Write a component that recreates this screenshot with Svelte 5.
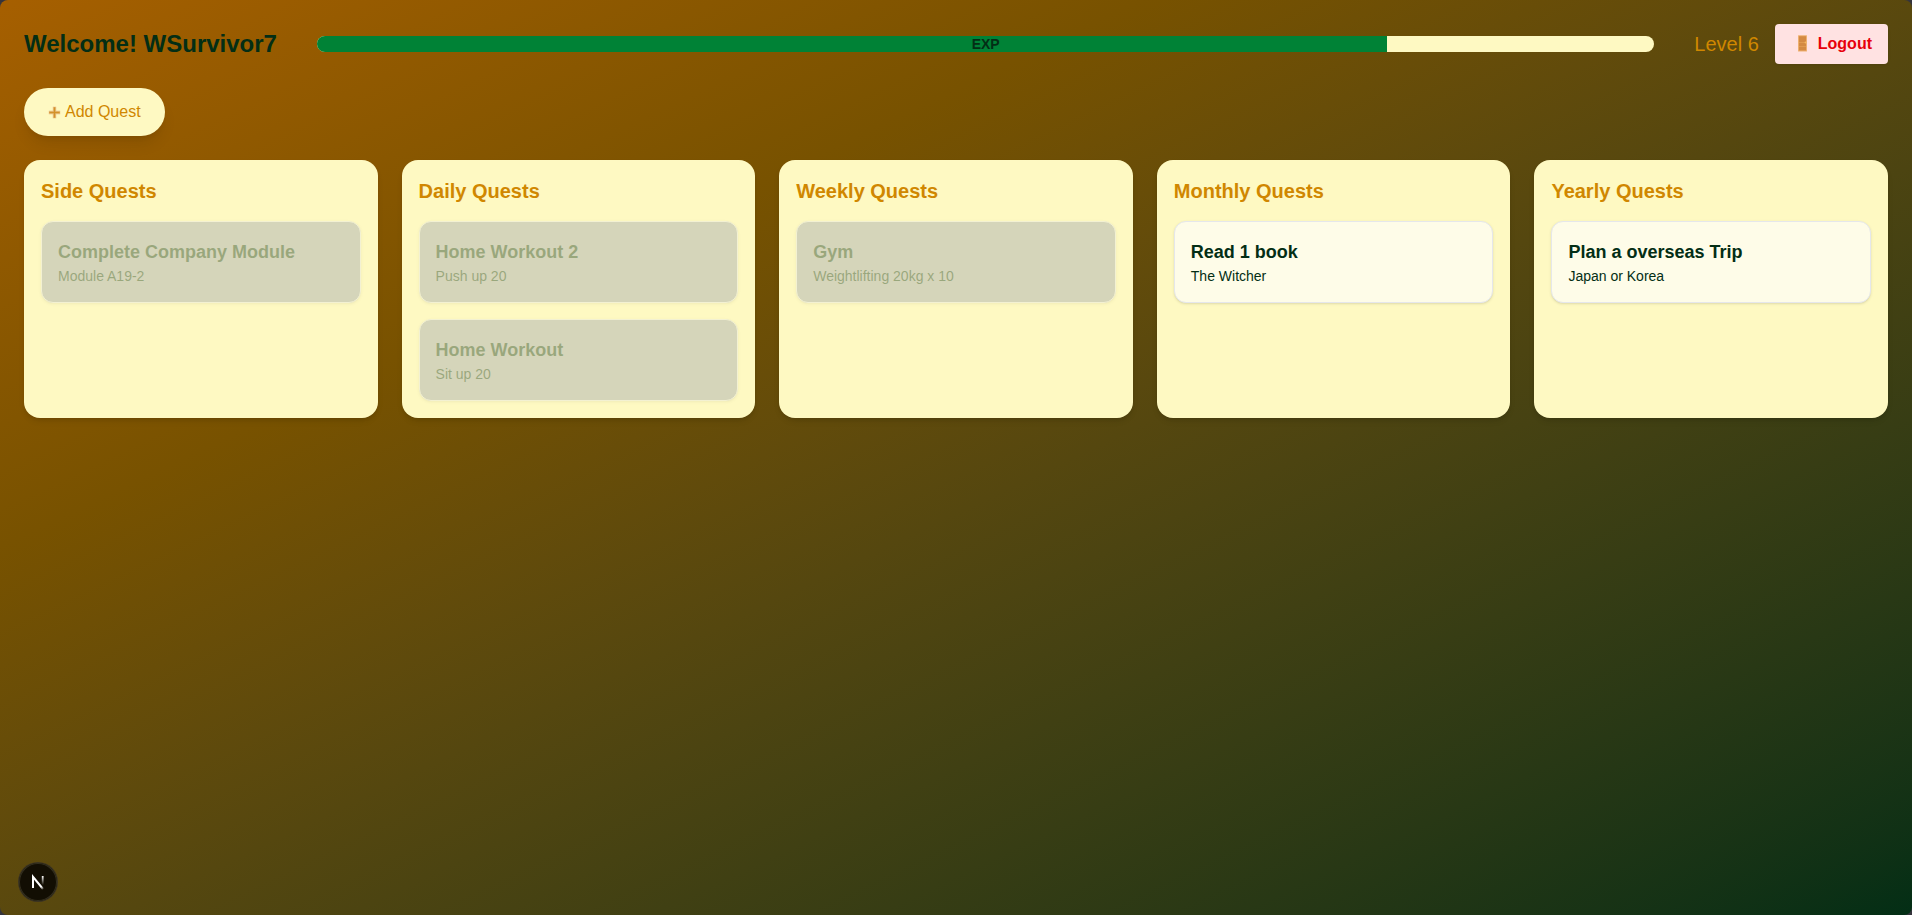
<script>
  const exp = 80;
  const columns = [
    { title: 'Side Quests', quests: [{ name: 'Complete Company Module', note: 'Module A19-2', done: true }] },
    {
      title: 'Daily Quests',
      quests: [
        { name: 'Home Workout 2', note: 'Push up 20', done: true },
        { name: 'Home Workout', note: 'Sit up 20', done: true }
      ]
    },
    { title: 'Weekly Quests', quests: [{ name: 'Gym', note: 'Weightlifting 20kg x 10', done: true }] },
    { title: 'Monthly Quests', quests: [{ name: 'Read 1 book', note: 'The Witcher', done: false }] },
    { title: 'Yearly Quests', quests: [{ name: 'Plan a overseas Trip', note: 'Japan or Korea', done: false }] }
  ];
</script>

<main>
  <header>
    <h1>Welcome! WSurvivor7</h1>
    <div class="bar">
      <div class="fill" style="width: {exp}%"></div>
      <span>EXP</span>
    </div>
    <div class="right">
      <span class="level">Level 6</span>
      <button class="logout">
        <svg width="22" height="18" viewBox="0 0 22 18">
          <rect x="7" y="0.2" width="9" height="16.3" rx="0.5" fill="#eeb070" />
          <rect x="8" y="1.2" width="7" height="14.3" fill="#d48a42" />
          <path d="M8 7.5h7M8 11.5h7" stroke="#e09a50" />
          <circle cx="14.5" cy="7.5" r="0.9" fill="#f5b95c" />
        </svg>
        Logout
      </button>
    </div>
  </header>

  <button class="add">
    <svg width="13" height="13" viewBox="0 0 13 13">
      <path d="M6.5 0.8v11.4M0.8 6.5h11.4" stroke="#e8bd80" stroke-width="3.4" />
      <path d="M6.5 1.3v10.4M1.3 6.5h10.4" stroke="#d3922a" stroke-width="1.5" />
    </svg>
    Add Quest
  </button>

  <div class="board">
    {#each columns as col}
      <section>
        <h2>{col.title}</h2>
        {#each col.quests as q}
          <article class:done={q.done}>
            <h3>{q.name}</h3>
            <p>{q.note}</p>
          </article>
        {/each}
      </section>
    {/each}
  </div>

  <div class="badge">
    <svg width="38" height="38" viewBox="0 0 38 38" fill="none">
      <defs>
        <linearGradient id="diag" gradientUnits="userSpaceOnUse" x1="19" y1="19" x2="25" y2="26">
          <stop stop-color="#fff" />
          <stop offset="0.6" stop-color="#fff" />
          <stop offset="1" stop-color="#fff" stop-opacity="0.1" />
        </linearGradient>
        <linearGradient id="stem" gradientUnits="userSpaceOnUse" x1="24" y1="13" x2="24" y2="22">
          <stop stop-color="#fff" />
          <stop offset="1" stop-color="#fff" stop-opacity="0" />
        </linearGradient>
      </defs>
      <path d="M14 25V13.8L24 26" stroke="url(#diag)" stroke-width="2" />
      <path d="M23.7 13v9" stroke="url(#stem)" stroke-width="1.8" />
    </svg>
  </div>
</main>

<style>
  :global(body) {
    margin: 0;
    background: #35343c;
  }
  main {
    box-sizing: border-box;
    height: 915px;
    padding: 24px;
    border-radius: 8px;
    background: linear-gradient(to bottom right in oklab, oklch(55.4% 0.135 66.442), oklch(26.6% 0.065 152.934));
    font-family: 'Liberation Sans', Arial, sans-serif;
    font-size: 16px;
    line-height: 24px;
    color: #032e15;
    overflow: hidden;
  }
  h1, h2, h3, p {
    margin: 0;
  }
  button {
    border: 0;
    font: inherit;
    display: flex;
    align-items: center;
  }
  header {
    display: flex;
    align-items: center;
    height: 40px;
    gap: 40px;
    margin-bottom: 24px;
  }
  h1 {
    font-size: 24px;
    line-height: 32px;
  }
  .bar {
    flex: 1;
    height: 16px;
    border-radius: 8px;
    background: #fef9c2;
    overflow: hidden;
    position: relative;
  }
  .fill {
    height: 100%;
    background: #008236;
  }
  .bar span {
    position: absolute;
    inset: 0;
    text-align: center;
    font-size: 14px;
    font-weight: 700;
    line-height: 16px;
  }
  .right {
    display: flex;
    align-items: center;
    gap: 16px;
  }
  .level {
    font-size: 20px;
    line-height: 28px;
    color: #d08700;
  }
  .logout {
    height: 40px;
    padding: 0 16px;
    gap: 5px;
    border-radius: 4px;
    background: #ffe2e2;
    color: #e7000b;
    font-weight: 700;
    box-shadow: 0 1px 3px rgba(0, 0, 0, 0.1);
  }
  .add {
    height: 48px;
    padding: 0 24px;
    gap: 4px;
    border-radius: 24px;
    background: #fef9c2;
    color: #d08700;
    box-shadow: 0 10px 15px -3px rgba(0, 0, 0, 0.1), 0 4px 6px -4px rgba(0, 0, 0, 0.1);
    margin-bottom: 24px;
  }
  .board {
    display: grid;
    grid-template-columns: repeat(5, minmax(0, 1fr));
    gap: 24px;
  }
  section {
    display: flex;
    flex-direction: column;
    gap: 16px;
    padding: 17px;
    border-radius: 16px;
    background: #fef9c2;
    box-shadow: 0 4px 6px -1px rgba(0, 0, 0, 0.1), 0 2px 4px -2px rgba(0, 0, 0, 0.1);
  }
  h2 {
    font-size: 20px;
    line-height: 28px;
    color: #d08700;
  }
  article {
    padding: 16px;
    border: 1px solid #e5e7eb;
    border-radius: 12px;
    background: #fefce8;
    box-shadow: 0 1px 3px rgba(0, 0, 0, 0.1), 0 1px 2px -1px rgba(0, 0, 0, 0.1);
  }
  .done {
    background: #99a1af;
    opacity: 0.4;
  }
  h3 {
    font-size: 18px;
    line-height: 28px;
  }
  p {
    font-size: 14px;
    line-height: 20px;
  }
  .badge {
    position: absolute;
    left: 19px;
    top: 863px;
    width: 38px;
    height: 38px;
    border-radius: 50%;
    background: #120e03;
    box-shadow: 0 0 0 1px #3b3322, inset 0 0 0 1px #34301f;
  }
  .badge svg {
    display: block;
  }
</style>
